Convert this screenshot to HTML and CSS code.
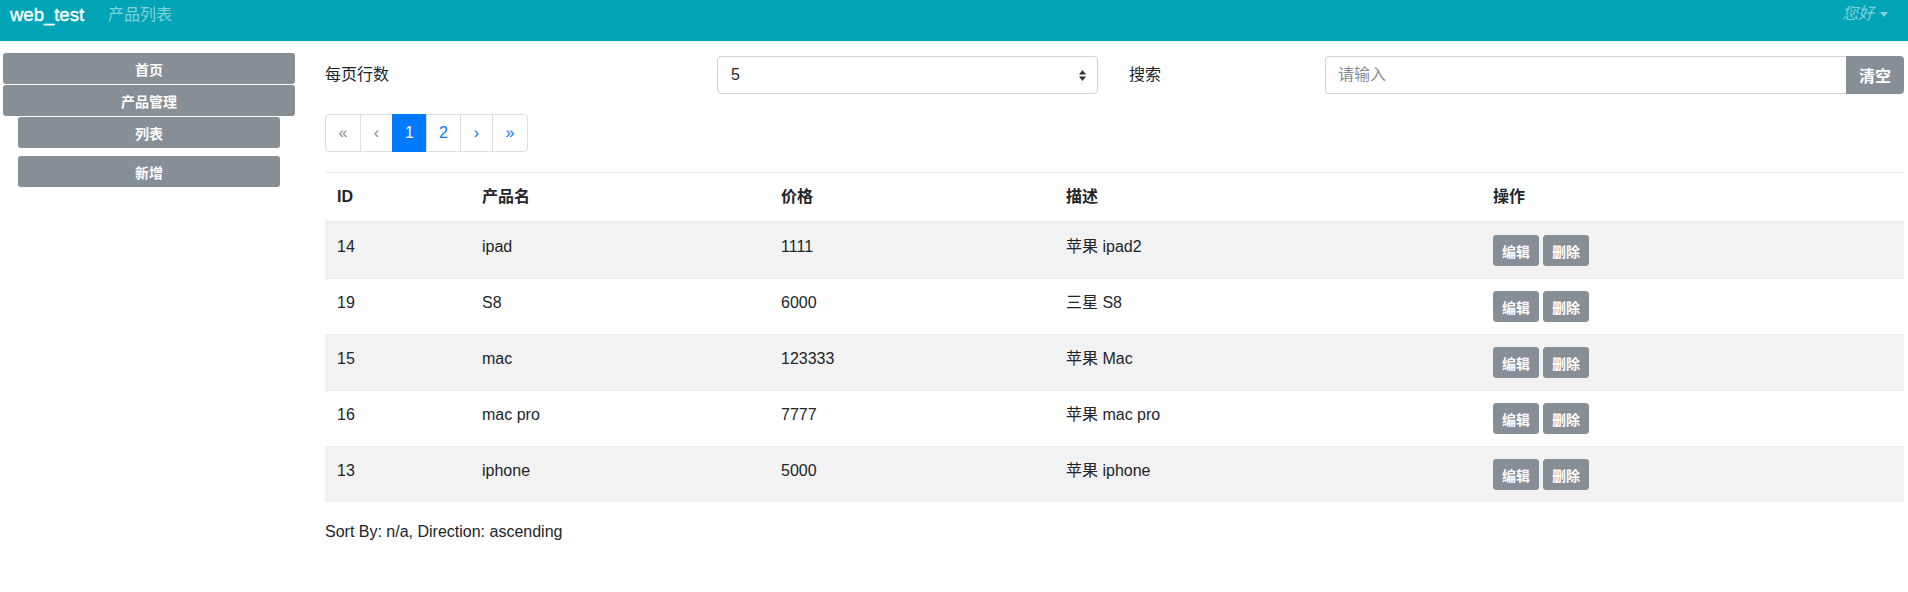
FILE: index.html
```html
<!DOCTYPE html>
<html lang="zh">
<head>
<meta charset="utf-8">
<title>web_test</title>
<link rel="stylesheet" href="styles.css">
</head>
<body>
<nav class="navbar">
  <a class="brand" href="#">web_test</a>
  <a class="nav-link" href="#">产品列表</a>
  <a class="user" href="#">您好<span class="caret"></span></a>
</nav>
<div class="layout">
  <aside class="sidebar">
    <button class="side-btn">首页</button>
    <button class="side-btn">产品管理</button>
    <div class="sub">
      <button class="side-btn">列表</button>
      <button class="side-btn">新增</button>
    </div>
  </aside>
  <main class="content">
    <div class="toolbar">
      <div class="label">每页行数</div>
      <div class="select">
        <span>5</span>
        <svg class="arrows" width="7" height="11" viewBox="0 0 7 11"><polygon points="0,4.5 3.5,0 7,4.5" fill="#333"/><polygon points="0,6.5 3.5,11 7,6.5" fill="#333"/></svg>
      </div>
      <div class="label search-label">搜索</div>
      <div class="input-group">
        <input class="input" type="text" placeholder="请输入">
        <button class="btn-clear">清空</button>
      </div>
    </div>
    <ul class="pagination">
      <li class="page disabled"><span class="page-link dbl">«</span></li>
      <li class="page disabled"><span class="page-link sgl">‹</span></li>
      <li class="page active"><span class="page-link num">1</span></li>
      <li class="page"><span class="page-link num">2</span></li>
      <li class="page"><span class="page-link sgl">›</span></li>
      <li class="page"><span class="page-link dbl">»</span></li>
    </ul>
    <table class="table">
      <colgroup>
        <col class="c-id"><col class="c-name"><col class="c-price"><col class="c-desc"><col class="c-op">
      </colgroup>
      <thead>
        <tr><th>ID</th><th>产品名</th><th>价格</th><th>描述</th><th>操作</th></tr>
      </thead>
      <tbody>
        <tr><td>14</td><td>ipad</td><td>1111</td><td>苹果 ipad2</td><td><div class="actions"><button class="btn-sm">编辑</button><button class="btn-sm">删除</button></div></td></tr>
        <tr><td>19</td><td>S8</td><td>6000</td><td>三星 S8</td><td><div class="actions"><button class="btn-sm">编辑</button><button class="btn-sm">删除</button></div></td></tr>
        <tr><td>15</td><td>mac</td><td>123333</td><td>苹果 Mac</td><td><div class="actions"><button class="btn-sm">编辑</button><button class="btn-sm">删除</button></div></td></tr>
        <tr><td>16</td><td>mac pro</td><td>7777</td><td>苹果 mac pro</td><td><div class="actions"><button class="btn-sm">编辑</button><button class="btn-sm">删除</button></div></td></tr>
        <tr><td>13</td><td>iphone</td><td>5000</td><td>苹果 iphone</td><td><div class="actions"><button class="btn-sm">编辑</button><button class="btn-sm">删除</button></div></td></tr>
      </tbody>
    </table>
    <p class="sort">Sort By: n/a, Direction: ascending</p>
  </main>
</div>
</body>
</html>
```
FILE: styles.css
```css
* { box-sizing: border-box; }

body {
  margin: 0;
  font-family: "Liberation Sans", "Noto Sans CJK SC", sans-serif;
  font-size: 16px;
  line-height: 1.5;
  color: #212529;
  background: #fff;
}

a { text-decoration: none; }

.navbar {
  display: flex;
  align-items: flex-start;
  height: 41px;
  background: #00a4b7;
  padding: 0 20px 0 10px;
}

.brand {
  font-size: 18.5px;
  line-height: 30px;
  color: #fff;
  margin-right: 16px;
  -webkit-text-stroke: 0.4px #fff;
}

.nav-link {
  font-size: 16px;
  line-height: 30px;
  padding: 0 8px;
  color: rgba(255, 255, 255, 0.5);
}

.user {
  margin-left: auto;
  display: flex;
  align-items: center;
  font-size: 16px;
  line-height: 28px;
  font-style: italic;
  color: rgba(255, 255, 255, 0.5);
}

.caret {
  width: 0;
  height: 0;
  margin-left: 6px;
  border-top: 5px solid rgba(255, 255, 255, 0.5);
  border-left: 4.5px solid transparent;
  border-right: 4.5px solid transparent;
}

.layout {
  display: flex;
  align-items: flex-start;
}

.sidebar {
  width: 292px;
  margin: 12px 0 0 3px;
  display: flex;
  flex-direction: column;
  gap: 1px;
}

.side-btn {
  height: 31px;
  border: 0;
  border-radius: 3px;
  background: #868e96;
  color: #fff;
  font-family: inherit;
  font-size: 14px;
  font-weight: bold;
  padding: 0;
}

.sub {
  display: flex;
  flex-direction: column;
  gap: 8px;
  padding: 0 15px;
}

.content {
  width: 1579px;
  margin: 15px 0 0 30px;
}

.toolbar {
  display: grid;
  grid-template-columns: 392px 381px 227px 1fr;
  align-items: center;
  height: 38px;
}

.search-label { padding-left: 31px; }

.select {
  height: 38px;
  border: 1px solid #ced4da;
  border-radius: 4px;
  display: flex;
  align-items: center;
  justify-content: space-between;
  padding: 0 11px 0 13px;
}

.input-group {
  display: flex;
  height: 38px;
}

.input {
  flex: 1;
  min-width: 0;
  height: 38px;
  border: 1px solid #ced4da;
  border-right: 0;
  border-radius: 4px 0 0 4px;
  padding: 0 12px;
  font-family: inherit;
  font-size: 16px;
  color: #495057;
  outline: none;
}

.input::placeholder { color: #868e96; }

.btn-clear {
  width: 58px;
  height: 38px;
  border: 0;
  border-radius: 0 4px 4px 0;
  background: #868e96;
  color: #fff;
  font-family: inherit;
  font-size: 16px;
  font-weight: bold;
  padding: 0;
}

.pagination {
  display: flex;
  list-style: none;
  margin: 20px 0 0;
  padding: 0;
}

.page-link {
  display: block;
  padding: 8px 0;
  text-align: center;
  line-height: 20px;
  border: 1px solid #ddd;
  margin-left: -1px;
  color: #007bff;
  background: #fff;
}

.page-link.dbl { width: 36px; }
.page-link.sgl { width: 33px; }
.page-link.num { width: 35px; }

.page:first-child .page-link {
  margin-left: 0;
  border-radius: 4px 0 0 4px;
}

.page:last-child .page-link { border-radius: 0 4px 4px 0; }

.page.disabled .page-link { color: #868e96; }

.page.active .page-link {
  background: #007bff;
  border-color: #007bff;
  color: #fff;
}

.table {
  width: 100%;
  margin-top: 20px;
  border-collapse: collapse;
  table-layout: fixed;
}

.c-id { width: 145px; }
.c-name { width: 299px; }
.c-price { width: 285px; }
.c-desc { width: 427px; }
.c-op { width: 423px; }

.table th,
.table td {
  padding: 12px;
  border-top: 1px solid #e9ecef;
  text-align: left;
  vertical-align: top;
}

.table thead th {
  border-bottom: 2px solid #e9ecef;
  font-weight: bold;
}

.table tbody tr:nth-child(odd) { background: rgba(0, 0, 0, 0.05); }

.actions {
  display: flex;
  gap: 4px;
}

.btn-sm {
  height: 31px;
  padding: 0 8px;
  border: 1px solid #868e96;
  border-radius: 3px;
  background: #868e96;
  color: #fff;
  font-family: inherit;
  font-size: 14px;
  font-weight: bold;
}

.sort { margin: 18px 0 0; }
```
